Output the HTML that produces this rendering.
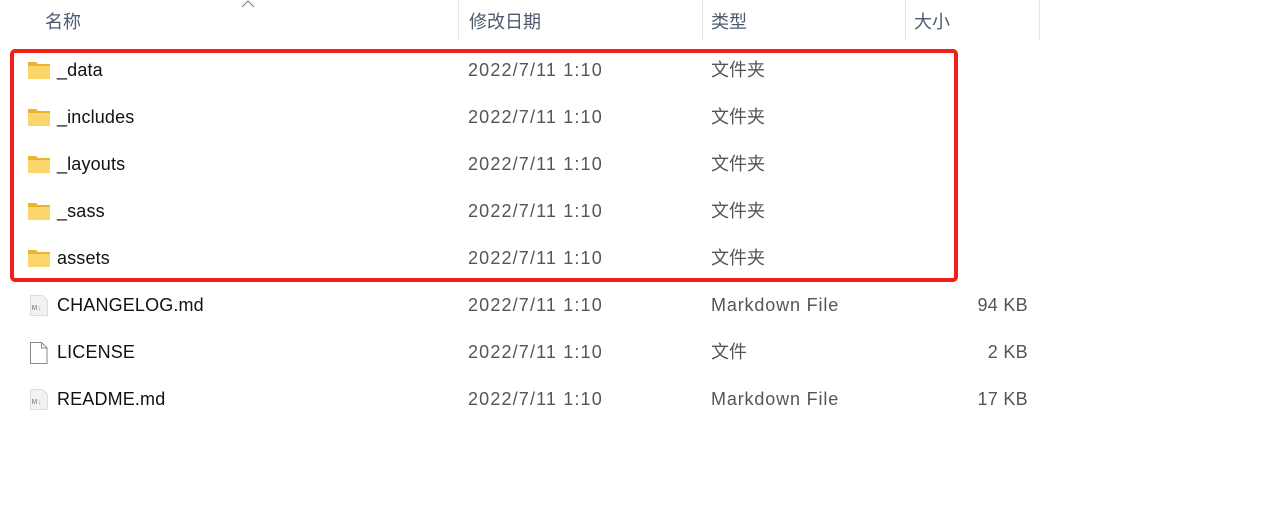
<!DOCTYPE html>
<html><head><meta charset="utf-8"><style>
body{margin:0;width:1270px;height:520px;background:#fff;position:relative;overflow:hidden;font-family:"Liberation Sans","Noto Sans CJK SC",sans-serif;font-size:18px}
.h{position:absolute;top:8px;color:#4c5b70;font-size:18px}
.sep{position:absolute;top:0;height:40px;width:1px;background:#e5e5e5}
.r{position:absolute;left:0;width:1270px;height:47px;line-height:47px}
.r span{position:absolute;white-space:nowrap}
.n{left:57px;color:#111;letter-spacing:0.15px}
.d{left:468px;color:#555;letter-spacing:1.15px}
.t{left:711px;color:#555}
.m{letter-spacing:0.85px}
.s{right:242px;color:#555;letter-spacing:0.3px}
.ic{position:absolute;left:28px;top:14px}
.box{position:absolute;left:10px;top:49px;width:940px;height:225px;border:4px solid #f0201a;border-radius:5px}
</style></head><body>
<div class="h" style="left:45px">名称</div>
<svg style="position:absolute;left:241px;top:0" width="14" height="8"><path d="M1 7 L7 1 L13 7" fill="none" stroke="#777" stroke-width="1"/></svg>
<div class="sep" style="left:458px"></div>
<div class="h" style="left:469px">修改日期</div>
<div class="sep" style="left:702px"></div>
<div class="h" style="left:711px">类型</div>
<div class="sep" style="left:905px"></div>
<div class="h" style="left:914px">大小</div>
<div class="sep" style="left:1039px"></div>

<div class="r" style="top:47px"><svg class="ic" width="22" height="18"><path d="M0 1h8l2 2h12v15H0z" fill="#e9b530"/><path d="M0 5h22v13H0z" fill="#fbd66a"/></svg><span class="n">_data</span><span class="d">2022/7/11 1:10</span><span class="t">文件夹</span></div>
<div class="r" style="top:94px"><svg class="ic" width="22" height="18"><path d="M0 1h8l2 2h12v15H0z" fill="#e9b530"/><path d="M0 5h22v13H0z" fill="#fbd66a"/></svg><span class="n">_includes</span><span class="d">2022/7/11 1:10</span><span class="t">文件夹</span></div>
<div class="r" style="top:141px"><svg class="ic" width="22" height="18"><path d="M0 1h8l2 2h12v15H0z" fill="#e9b530"/><path d="M0 5h22v13H0z" fill="#fbd66a"/></svg><span class="n">_layouts</span><span class="d">2022/7/11 1:10</span><span class="t">文件夹</span></div>
<div class="r" style="top:188px"><svg class="ic" width="22" height="18"><path d="M0 1h8l2 2h12v15H0z" fill="#e9b530"/><path d="M0 5h22v13H0z" fill="#fbd66a"/></svg><span class="n">_sass</span><span class="d">2022/7/11 1:10</span><span class="t">文件夹</span></div>
<div class="r" style="top:235px"><svg class="ic" width="22" height="18"><path d="M0 1h8l2 2h12v15H0z" fill="#e9b530"/><path d="M0 5h22v13H0z" fill="#fbd66a"/></svg><span class="n">assets</span><span class="d">2022/7/11 1:10</span><span class="t">文件夹</span></div>
<div class="r" style="top:282px"><svg class="ic" style="left:30px;top:13px" width="18" height="21"><path d="M0.5 0.5h12l5 5v15H0.5z" fill="#f2f2f2" stroke="#ddd"/><text x="1.5" y="15" font-size="7" font-weight="bold" fill="#999" font-family="Liberation Sans">M↓</text></svg><span class="n">CHANGELOG.md</span><span class="d">2022/7/11 1:10</span><span class="t m">Markdown File</span><span class="s">94 KB</span></div>
<div class="r" style="top:329px"><svg class="ic" style="left:30px;top:13px" width="18" height="22"><path d="M0.5 0.5h11l5.5 5.5v15.5H0.5z" fill="#fff" stroke="#888"/><path d="M11.5 0.5v5.5h5.5" fill="none" stroke="#888"/></svg><span class="n">LICENSE</span><span class="d">2022/7/11 1:10</span><span class="t">文件</span><span class="s">2 KB</span></div>
<div class="r" style="top:376px"><svg class="ic" style="left:30px;top:13px" width="18" height="21"><path d="M0.5 0.5h12l5 5v15H0.5z" fill="#f2f2f2" stroke="#ddd"/><text x="1.5" y="15" font-size="7" font-weight="bold" fill="#999" font-family="Liberation Sans">M↓</text></svg><span class="n">README.md</span><span class="d">2022/7/11 1:10</span><span class="t m">Markdown File</span><span class="s">17 KB</span></div>
<div class="box"></div>
</body></html>
